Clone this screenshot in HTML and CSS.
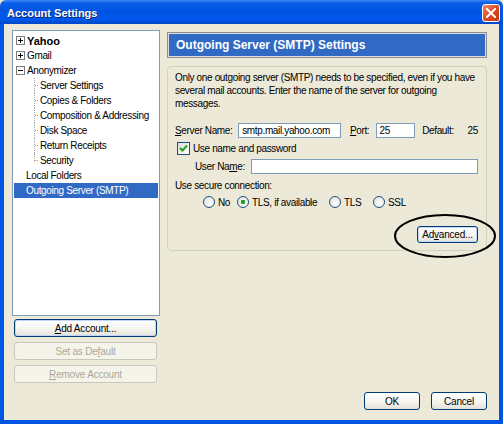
FILE: index.html
```html
<!DOCTYPE html>
<html lang="en">

<head>
    <meta charset="UTF-8">
    <title>Account Settings</title>
    <link rel="stylesheet" href="styles.css">
</head>

<body>

    <div class="window">
        <!-- Title bar -->
        <div class="titlebar">
            <span class="title">Account Settings</span>
            <span class="close-btn">
                <svg width="10" height="10" viewBox="0 0 10 10">
                    <path d="M1 1 L9 9 M9 1 L1 9" stroke="#fff" stroke-width="2" stroke-linecap="square" />
                </svg>
            </span>
        </div>

        <div class="client">
            <div class="columns">
                <!-- Account tree + account buttons -->
                <div class="sidebar">
                    <div class="tree">
                        <div class="tree-row"><span class="expander plus"></span><b>Yahoo</b></div>
                        <div class="tree-row"><span class="expander plus"></span>Gmail</div>
                        <div class="tree-row"><span class="expander minus"></span>Anonymizer</div>
                        <div class="tree-row child"><span class="twig"></span>Server Settings</div>
                        <div class="tree-row child"><span class="twig"></span>Copies &amp; Folders</div>
                        <div class="tree-row child"><span class="twig"></span>Composition &amp; Addressing</div>
                        <div class="tree-row child"><span class="twig"></span>Disk Space</div>
                        <div class="tree-row child"><span class="twig"></span>Return Receipts</div>
                        <div class="tree-row child"><span class="twig last"></span>Security</div>
                        <div class="tree-row leaf">Local Folders</div>
                        <div class="tree-row leaf selected">Outgoing Server (SMTP)</div>
                    </div>
                    <button class="btn side-btn default"><u>A</u>dd Account...</button>
                    <button class="btn side-btn" disabled>Set as De<u>f</u>ault</button>
                    <button class="btn side-btn" disabled><u>R</u>emove Account</button>
                </div>

                <!-- SMTP settings panel -->
                <div class="panel">
                    <div class="panel-header">Outgoing Server (SMTP) Settings</div>
                    <div class="group">
                        <p class="desc">Only one outgoing server (SMTP) needs to be specified, even if you have several mail accounts. Enter the name of the server for outgoing messages.</p>

                        <div class="field-row server-row">
                            <span class="server-label"><u>S</u>erver Name:</span>
                            <span class="input server-input">smtp.mail.yahoo.com</span>
                            <span class="port-label"><u>P</u>ort:</span>
                            <span class="input port-input">25</span>
                            <span class="default-label">Default:</span>
                            <span>25</span>
                        </div>

                        <div class="field-row check-row">
                            <span class="checkbox">
                                <svg width="9" height="9" viewBox="0 0 9 9">
                                    <path d="M1 4 L3.5 6.5 L8 1.5" fill="none" stroke="#21a121" stroke-width="2" />
                                </svg>
                            </span>
                            <span>Use name and password</span>
                        </div>

                        <div class="field-row user-row">
                            <span class="user-label">User Na<u>m</u>e:</span>
                            <span class="input user-input"></span>
                        </div>

                        <div class="secure-label">Use secure connection:</div>
                        <div class="field-row radio-row">
                            <span class="radio-opt opt-no"><span class="radio"></span>No</span>
                            <span class="radio-opt opt-tlsif"><span class="radio checked"></span>TLS, if available</span>
                            <span class="radio-opt opt-tls"><span class="radio"></span>TLS</span>
                            <span class="radio-opt"><span class="radio"></span>SSL</span>
                        </div>

                        <div class="advanced-row">
                            <button class="btn advanced-btn">Ad<u>v</u>anced...</button>
                        </div>
                    </div>
                </div>
            </div>

            <!-- Dialog buttons -->
            <div class="footer">
                <button class="btn dlg-btn">OK</button>
                <button class="btn dlg-btn">Cancel</button>
            </div>
        </div>

        <!-- hand-drawn ring around the Advanced button -->
        <svg class="ring" width="108" height="50" viewBox="0 0 108 50">
            <ellipse cx="53" cy="24" rx="50" ry="21" fill="none" stroke="#000" stroke-width="2" />
        </svg>
    </div>

</body>

</html>
```

FILE: styles.css
```css
/* Reset */
* {
    margin: 0;
    padding: 0;
    box-sizing: border-box;
}

body {
    background: #ece9d8;
    font-family: "Liberation Sans", Arial, sans-serif;
    font-size: 10px;
    letter-spacing: -0.35px;
    color: #000;
}

u {
    text-decoration: underline;
}

/* Window frame */
.window {
    position: relative;
    width: 503px;
    height: 424px;
    display: flex;
    flex-direction: column;
}

.titlebar {
    height: 24px;
    display: flex;
    align-items: center;
    justify-content: space-between;
    padding: 0 3px 0 7px;
    background: linear-gradient(#3d8af7 0%, #0a5fe8 12%, #0054e3 45%, #0058ee 80%, #0046c8 100%);
    border-radius: 6px 6px 0 0;
}

.title {
    color: #fff;
    font-weight: bold;
    font-size: 11px;
    letter-spacing: 0;
    text-shadow: 1px 1px 0 #0a246a;
    padding-top: 1px;
}

.close-btn {
    width: 18px;
    height: 18px;
    margin-top: 1px;
    display: flex;
    align-items: center;
    justify-content: center;
    background: linear-gradient(135deg, #f08a6a, #d9481f 55%, #c23a12);
    border: 1px solid #fff;
    border-radius: 3px;
}

.client {
    flex: 1;
    display: flex;
    flex-direction: column;
    border: 4px solid #0055e5;
    border-top: none;
    padding: 6px 8px 0 8px;
    background: #ece9d8;
}

.columns {
    display: flex;
    gap: 7px;
}

/* Left side: tree */
.sidebar {
    width: 148px;
    display: flex;
    flex-direction: column;
}

.tree {
    height: 286px;
    background: #fff;
    border: 1px solid #7f9db9;
    padding: 2px 1px 0 1px;
}

.tree-row {
    height: 15px;
    display: flex;
    align-items: center;
    padding-left: 2px;
    white-space: nowrap;
}

.tree-row b {
    font-weight: bold;
    font-size: 11px;
    letter-spacing: 0;
}

.expander {
    width: 9px;
    height: 9px;
    margin-right: 2px;
    border: 1px solid #7a7a7a;
    background: linear-gradient(#000, #000) center / 5px 1px no-repeat, #fff;
}

.expander.plus {
    background: linear-gradient(#000, #000) center / 5px 1px no-repeat,
                linear-gradient(#000, #000) center / 1px 5px no-repeat, #fff;
}

.tree-row.child {
    padding-left: 20px;
}

.twig {
    width: 5px;
    height: 15px;
    margin-right: 1px;
    align-self: flex-start;
    border-left: 1px dotted #a0a0a0;
    background: linear-gradient(90deg, #a0a0a0 50%, transparent 50%) 0 7px / 2px 1px repeat-x;
}

.twig.last {
    height: 8px;
}

.tree-row.leaf {
    padding-left: 12px;
}

.tree-row.selected {
    background: #316ac5;
    color: #fff;
}

/* Buttons */
.btn {
    font-family: inherit;
    font-size: 10px;
    letter-spacing: -0.2px;
    color: #000;
    height: 18px;
    border: 1px solid #003c74;
    border-radius: 3px;
    background: linear-gradient(#fff, #f4f3ee 60%, #e3e1d6);
}

.btn:disabled {
    color: #aca899;
    border-color: #c9c7ba;
    background: #f5f4ea;
}

.side-btn {
    width: 143px;
    margin: 5px 0 0 2px;
}

.side-btn.default {
    margin-top: 3px;
    box-shadow: inset 0 0 0 1px #c2d5f7;
}

/* Right side: panel */
.panel {
    width: 320px;
}

.panel-header {
    margin-top: 2px;
    height: 26px;
    background: #316ac5;
    border: 1px solid #8e8e8e;
    box-shadow: inset 0 0 0 1px #dcdcdc;
    color: #fff;
    font-weight: bold;
    font-size: 12px;
    letter-spacing: 0;
    padding-left: 8px;
    display: flex;
    align-items: center;
}

.group {
    margin-top: 8px;
    height: 185px;
    border: 1px solid #d0d0bf;
    border-radius: 4px;
    padding: 4px 8px 0 7px;
    display: flex;
    flex-direction: column;
}

.desc {
    line-height: 13px;
}

.field-row {
    display: flex;
    align-items: center;
    white-space: nowrap;
}

.input {
    height: 15px;
    background: #fff;
    border: 1px solid #7f9db9;
    padding-left: 3px;
    display: flex;
    align-items: center;
}

.server-row {
    margin-top: 13px;
}

.server-label {
    width: 64px;
}

.server-input {
    width: 104px;
}

.port-label {
    margin-left: 9px;
    width: 26px;
}

.port-input {
    width: 40px;
}

.default-label {
    margin-left: 7px;
    width: 46px;
}

.check-row {
    margin-top: 4px;
    padding-left: 2px;
}

.checkbox {
    width: 13px;
    height: 13px;
    margin-right: 3px;
    border: 1px solid #1c5180;
    background: linear-gradient(135deg, #dcdcd7, #fff);
    display: flex;
    align-items: center;
    justify-content: center;
}

.user-row {
    margin-top: 4px;
    padding-left: 20px;
}

.user-label {
    width: 56px;
}

.user-input {
    width: 229px;
}

.secure-label {
    margin-top: 6px;
}

.radio-row {
    margin-top: 5px;
    padding-left: 28px;
}

.radio-opt {
    display: flex;
    align-items: center;
}

.opt-no {
    width: 34px;
}

.opt-tlsif {
    width: 92px;
}

.opt-tls {
    width: 44px;
}

.radio {
    width: 12px;
    height: 12px;
    margin-right: 3px;
    border: 1px solid #1c5180;
    border-radius: 50%;
    background: radial-gradient(circle at 65% 65%, #fff, #dcdcd7);
}

.radio.checked {
    background: radial-gradient(circle, #21a121 0 2px, transparent 2.5px),
                radial-gradient(circle at 65% 65%, #fff, #dcdcd7);
}

.advanced-row {
    margin-top: auto;
    margin-bottom: 7px;
    display: flex;
    justify-content: flex-end;
}

.advanced-btn {
    width: 61px;
    height: 17px;
    box-shadow: inset 0 0 0 1px #c2d5f7;
}

/* Dialog footer */
.footer {
    margin-top: 9px;
    display: flex;
    justify-content: flex-end;
    gap: 11px;
    padding-right: 4px;
}

.dlg-btn {
    width: 56px;
}

/* ring drawn over the Advanced button */
.ring {
    position: absolute;
    left: 392px;
    top: 212px;
}
```
